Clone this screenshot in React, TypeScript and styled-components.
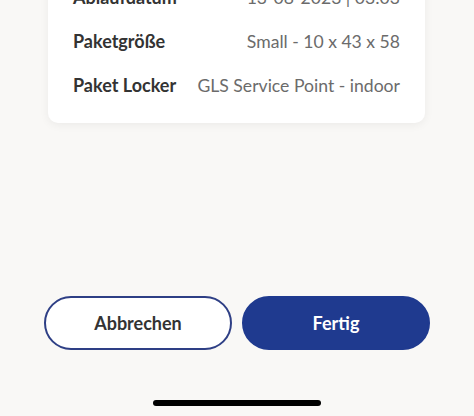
import styled, { createGlobalStyle } from 'styled-components'

const GlobalStyle = createGlobalStyle`
    html, body {
        margin: 0;
        padding: 0;
        background: #f9f8f6;
        font-family: Lato, "Open Sans", sans-serif;
    }
`

const Screen = styled.div`
    width: 474px;
    height: 416px;
    overflow: hidden;
    display: flex;
    flex-direction: column;
`

const Card = styled.div`
    margin: -40px 49px 0 48px;
    background: #ffffff;
    border-radius: 10px;
    box-shadow: 0 2px 10px rgba(0, 0, 0, 0.06);
    padding: 15px 25px 16px 25px;
`

const Row = styled.div`
    height: 44px;
    display: flex;
    align-items: center;
    justify-content: space-between;
    font-size: 18px;
`

const Label = styled.span`
    font-weight: 700;
    color: #333333;
`

const Value = styled.span`
    font-size: 17.6px;
    color: #6b6b6b;
`

const Actions = styled.div`
    margin: 173px 44px 0 44px;
    display: grid;
    grid-template-columns: 1fr 1fr;
    gap: 10px;
`

const Button = styled.button<{ $primary?: boolean }>`
    height: 54px;
    border-radius: 27px;
    border: 2px solid ${p => (p.$primary ? '#1f3a8f' : '#2e3f85')};
    background: ${p => (p.$primary ? '#1f3a8f' : '#ffffff')};
    color: ${p => (p.$primary ? '#ffffff' : '#333333')};
    font-family: Lato, "Open Sans", sans-serif;
    font-size: 18px;
    font-weight: 700;
    padding: 0;
`

const HomeBar = styled.div`
    margin: 50px auto 0 auto;
    width: 168px;
    height: 6px;
    border-radius: 3px;
    background: #000000;
`

const rows = [
    { label: 'Ablaufdatum', value: '13-08-2023 | 03:03' },
    { label: 'Paketgröße', value: 'Small - 10 x 43 x 58' },
    { label: 'Paket Locker', value: 'GLS Service Point - indoor' },
]

function App() {
    return (
        <Screen>
            <GlobalStyle />
            <Card>
                {rows.map(r => (
                    <Row key={r.label}>
                        <Label>{r.label}</Label>
                        <Value>{r.value}</Value>
                    </Row>
                ))}
            </Card>
            <Actions>
                <Button>Abbrechen</Button>
                <Button $primary>Fertig</Button>
            </Actions>
            <HomeBar />
        </Screen>
    )
}

export default App
